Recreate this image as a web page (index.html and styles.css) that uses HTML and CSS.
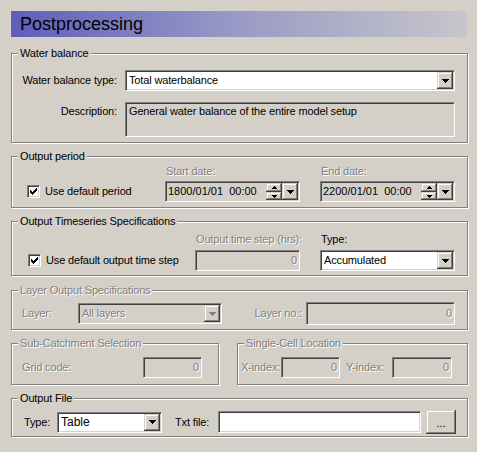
FILE: index.html
```html
<!DOCTYPE html>
<html lang="en">
<head>
<meta charset="utf-8">
<title>Postprocessing</title>
<link rel="stylesheet" href="styles.css">
</head>
<body>
<div class="panel">
  <div class="title">Postprocessing</div>

  <fieldset class="group">
    <legend>Water balance</legend>
    <div class="wb">
      <span class="lbl wb-type">Water balance type:</span>
      <div class="field combo">
        <span class="val">Total waterbalance</span>
        <span class="btn drop"><svg width="7" height="4" viewBox="0 0 7 4"><polygon points="0,0 7,0 7,1 6,1 6,2 5,2 5,3 4,3 4,4 3,4 3,3 2,3 2,2 1,2 1,1 0,1"/></svg></span>
      </div>
      <span class="lbl wb-desc">Description:</span>
      <div class="field memo">General water balance of the entire model setup</div>
    </div>
  </fieldset>

  <fieldset class="group">
    <legend>Output period</legend>
    <div class="row op">
      <label class="check op-check"><span class="box"><svg width="7" height="7" viewBox="0 0 7 7"><path d="M0 2h1v3H0zM1 3h1v3H1zM2 4h1v3H2zM3 3h1v3H3zM4 2h1v3H4zM5 1h1v3H5zM6 0h1v3H6z"/></svg></span>Use default period</label>
      <div class="col">
        <span class="cap dis">Start date:</span>
        <div class="field picker">
          <span class="val">1800/01/01&nbsp; 00:00</span>
          <span class="spin">
            <span class="btn up"><svg width="5" height="3" viewBox="0 0 5 3"><polygon points="2,0 3,0 3,1 4,1 4,2 5,2 5,3 0,3 0,2 1,2 1,1 2,1"/></svg></span>
            <span class="btn down"><svg width="5" height="3" viewBox="0 0 5 3"><polygon points="0,0 5,0 5,1 4,1 4,2 3,2 3,3 2,3 2,2 1,2 1,1 0,1"/></svg></span>
          </span>
          <span class="btn drop"><svg width="7" height="4" viewBox="0 0 7 4"><polygon points="0,0 7,0 7,1 6,1 6,2 5,2 5,3 4,3 4,4 3,4 3,3 2,3 2,2 1,2 1,1 0,1"/></svg></span>
        </div>
      </div>
      <div class="col col-end">
        <span class="cap dis">End date:</span>
        <div class="field picker">
          <span class="val">2200/01/01&nbsp; 00:00</span>
          <span class="spin">
            <span class="btn up"><svg width="5" height="3" viewBox="0 0 5 3"><polygon points="2,0 3,0 3,1 4,1 4,2 5,2 5,3 0,3 0,2 1,2 1,1 2,1"/></svg></span>
            <span class="btn down"><svg width="5" height="3" viewBox="0 0 5 3"><polygon points="0,0 5,0 5,1 4,1 4,2 3,2 3,3 2,3 2,2 1,2 1,1 0,1"/></svg></span>
          </span>
          <span class="btn drop"><svg width="7" height="4" viewBox="0 0 7 4"><polygon points="0,0 7,0 7,1 6,1 6,2 5,2 5,3 4,3 4,4 3,4 3,3 2,3 2,2 1,2 1,1 0,1"/></svg></span>
        </div>
      </div>
    </div>
  </fieldset>

  <fieldset class="group">
    <legend>Output Timeseries Specifications</legend>
    <div class="row ots">
      <label class="check ots-check"><span class="box"><svg width="7" height="7" viewBox="0 0 7 7"><path d="M0 2h1v3H0zM1 3h1v3H1zM2 4h1v3H2zM3 3h1v3H3zM4 2h1v3H4zM5 1h1v3H5zM6 0h1v3H6z"/></svg></span>Use default output time step</label>
      <div class="col col-step">
        <span class="cap dis">Output time step (hrs):</span>
        <div class="field edit"><span class="num dis">0</span></div>
      </div>
      <div class="col col-type">
        <span class="cap">Type:</span>
        <div class="field combo">
          <span class="val">Accumulated</span>
          <span class="btn drop"><svg width="7" height="4" viewBox="0 0 7 4"><polygon points="0,0 7,0 7,1 6,1 6,2 5,2 5,3 4,3 4,4 3,4 3,3 2,3 2,2 1,2 1,1 0,1"/></svg></span>
        </div>
      </div>
    </div>
  </fieldset>

  <fieldset class="group los-group">
    <legend class="dis">Layer Output Specifications</legend>
    <div class="row los">
      <span class="lbl-l dis layer-lbl">Layer:</span>
      <div class="field combo off layer-combo">
        <span class="val dis">All layers</span>
        <span class="btn drop"><svg class="gray" width="7" height="4" viewBox="0 0 7 4"><polygon points="0,0 7,0 7,1 6,1 6,2 5,2 5,3 4,3 4,4 3,4 3,3 2,3 2,2 1,2 1,1 0,1"/></svg></span>
      </div>
      <span class="lbl-r dis">Layer no.:</span>
      <div class="field edit tall layer-no"><span class="num dis">0</span></div>
    </div>
  </fieldset>

  <div class="pair">
    <fieldset class="group scs-group">
      <legend class="dis">Sub-Catchment Selection</legend>
      <div class="row scs">
        <span class="lbl-l dis grow">Grid code:</span>
        <div class="field edit grid-code"><span class="num dis">0</span></div>
      </div>
    </fieldset>
    <fieldset class="group scl-group">
      <legend class="dis">Single-Cell Location</legend>
      <div class="row scl">
        <span class="lbl-l dis x-lbl">X-index:</span>
        <div class="field edit x-edit"><span class="num dis">0</span></div>
        <span class="lbl-l dis y-lbl">Y-index:</span>
        <div class="field edit y-edit"><span class="num dis">0</span></div>
      </div>
    </fieldset>
  </div>

  <fieldset class="group">
    <legend>Output File</legend>
    <div class="row of">
      <span class="lbl-l type-lbl">Type:</span>
      <div class="field combo type-combo">
        <span class="val big">Table</span>
        <span class="btn drop"><svg width="7" height="4" viewBox="0 0 7 4"><polygon points="0,0 7,0 7,1 6,1 6,2 5,2 5,3 4,3 4,4 3,4 3,3 2,3 2,2 1,2 1,1 0,1"/></svg></span>
      </div>
      <span class="lbl-l txt-lbl">Txt file:</span>
      <div class="field txt-edit"></div>
      <span class="btn push">...</span>
    </div>
  </fieldset>
</div>
</body>
</html>
```

FILE: styles.css
```css
* { box-sizing: border-box; }
html, body { margin: 0; padding: 0; }
body {
  width: 477px;
  height: 452px;
  overflow: hidden;
  background: #d4d0c8;
  font-family: "Liberation Sans", Arial, sans-serif;
  font-size: 11px;
  line-height: 13px;
  letter-spacing: -0.15px;
  color: #000;
}
.panel { padding: 11px 9px 0 11px; }

.title {
  height: 26px;
  line-height: 26px;
  padding-left: 9px;
  margin-right: 1px;
  font-size: 18px;
  letter-spacing: 0;
  background: linear-gradient(to right, #5e5eba 0%, #9a9ac6 50%, #c6c6cc 100%);
}

.group {
  margin: 7px 0 0;
  padding: 0;
  min-width: 0;
  border: 1px solid #808080;
  box-shadow: inset 1px 1px 0 #fff, 1px 1px 0 #fff;
}
.title + .group { margin-top: 10px; }
.los-group { margin-top: 8px; }
legend {
  margin-left: 6px;
  padding: 0 2px;
  height: 13px;
  line-height: 13px;
  background: #d4d0c8;
  white-space: nowrap;
}

.dis { color: #808080; text-shadow: 1px 1px 0 #fff; }

/* generic sunken field */
.field {
  border: 1px solid;
  border-color: #808080 #fff #fff #808080;
  box-shadow: inset 1px 1px 0 #404040, inset -1px -1px 0 #d4d0c8;
  background: #d4d0c8;
}
.btn {
  display: flex;
  align-items: center;
  justify-content: center;
  background: #d4d0c8;
  box-shadow: inset -1px -1px 0 #404040, inset 1px 1px 0 #d4d0c8, inset -2px -2px 0 #808080, inset 2px 2px 0 #fff;
  flex: none;
}
.combo {
  height: 21px;
  padding: 1px;
  display: flex;
  align-items: center;
  background: #fff;
}
.combo.off { background: #d4d0c8; }
.combo .val { flex: 1; padding-left: 2px; white-space: nowrap; overflow: hidden; }
.drop { width: 16px; height: 17px; }
.drop svg { display: block; }
.gray polygon { fill: #808080; }

.memo { height: 35px; padding: 2px 3px; }

/* water balance */
.wb {
  display: grid;
  grid-template-columns: 96px 330px;
  column-gap: 8px;
  row-gap: 11px;
  padding: 10px 12px 5px 9px;
}
.lbl { text-align: right; white-space: nowrap; }
.wb-type { align-self: center; }
.wb-desc { padding-top: 3px; }

.row { display: flex; }
.check { display: flex; align-items: center; gap: 5px; white-space: nowrap; flex: none; }
.box {
  width: 13px;
  height: 13px;
  flex: none;
  border: 1px solid;
  border-color: #808080 #fff #fff #808080;
  box-shadow: inset 1px 1px 0 #404040, inset -1px -1px 0 #d4d0c8;
  background: #fff;
  display: flex;
  align-items: center;
  justify-content: center;
}
.box svg { display: block; }
.col { display: flex; flex-direction: column; gap: 3px; flex: none; }
.cap { padding-left: 1px; white-space: nowrap; }

/* output period */
.op { padding: 2px 12px 5px 15px; align-items: flex-end; }
.op-check { width: 138px; height: 21px; }
.op .col { width: 135px; }
.col-end { margin-left: 20px; }
.picker { height: 21px; padding: 1px; display: flex; align-items: center; }
.picker .val { flex: 1; padding-left: 1px; white-space: nowrap; letter-spacing: 0; }
.spin { width: 16px; height: 17px; display: flex; flex-direction: column; flex: none; }
.spin .up { height: 9px; }
.spin .down { height: 8px; }
.spin svg { display: block; }

/* output time series */
.ots { padding: 5px 12px 4px 16px; align-items: flex-end; }
.ots .col { gap: 4px; }
.ots-check { width: 167px; height: 21px; }
.col-step { width: 105px; }
.col-type { width: 135px; margin-left: 20px; }
.edit { height: 21px; line-height: 19px; text-align: right; padding: 0 2px; }
.edit.tall { height: 23px; line-height: 21px; }

/* layer output */
.los { padding: 5px 12px 4px 10px; align-items: center; }
.lbl-l { white-space: nowrap; flex: none; }
.lbl-r { flex: 1; text-align: right; padding-right: 4px; white-space: nowrap; }
.layer-lbl { width: 56px; }
.layer-combo { width: 144px; flex: none; }
.layer-no { width: 149px; flex: none; }

/* sub-catchment / single cell */
.pair { display: flex; gap: 18px; margin-top: 7px; }
.pair .group { margin: 0; }
.scs-group { width: 208px; flex: none; }
.scl-group { flex: 1; }
.scs { padding: 7px 16px 6px 10px; align-items: center; }
.grow { flex: 1; }
.grid-code { width: 59px; flex: none; }
.scl { padding: 7px 15px 6px 3px; align-items: center; }
.x-lbl { width: 40px; }
.x-edit { width: 59px; flex: none; }
.y-lbl { width: 52px; padding-left: 6px; }
.y-edit { width: 60px; flex: none; }

/* output file */
.of { padding: 5px 11px 2px 12px; align-items: center; }
.type-lbl { width: 33px; }
.type-combo { width: 105px; flex: none; }
.big { font-size: 12px; letter-spacing: 0; }
.txt-lbl { width: 56px; padding-left: 13px; }
.txt-edit { width: 203px; height: 22px; background: #fff; flex: none; }
.push { width: 30px; height: 24px; margin-left: 5px; padding-top: 3px; letter-spacing: 0; }
```
